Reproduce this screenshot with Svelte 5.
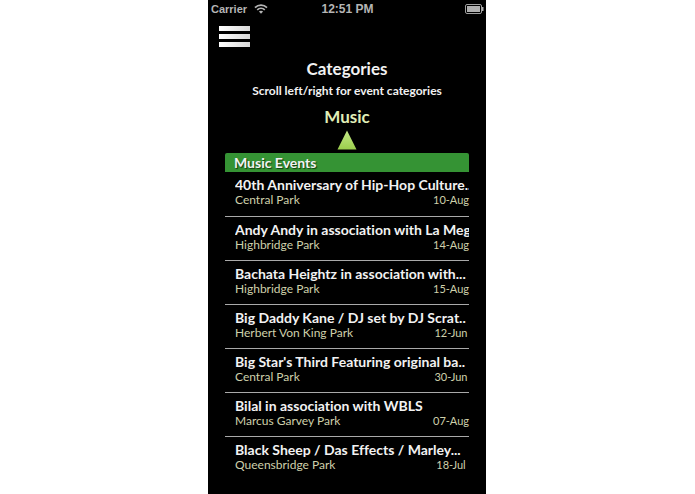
<script lang="ts">
	interface Event {
		name: string
		park: string
		date: string
	}

	const category = 'Music'

	const events: Event[] = [
		{ name: '40th Anniversary of Hip-Hop Culture...', park: 'Central Park', date: '10-Aug' },
		{ name: 'Andy Andy in association with La Mega', park: 'Highbridge Park', date: '14-Aug' },
		{ name: 'Bachata Heightz in association with...', park: 'Highbridge Park', date: '15-Aug' },
		{ name: 'Big Daddy Kane / DJ set by DJ Scrat..', park: 'Herbert Von King Park', date: '12-Jun' },
		{ name: "Big Star's Third Featuring original ba..", park: 'Central Park', date: '30-Jun' },
		{ name: 'Bilal in association with WBLS', park: 'Marcus Garvey Park', date: '07-Aug' },
		{ name: 'Black Sheep / Das Effects / Marley...', park: 'Queensbridge Park', date: '18-Jul' }
	]
</script>

<div class="page">
	<div class="phone">
		<div class="status-bar">
			<div class="carrier">
				<span>Carrier</span>
				<svg class="wifi" viewBox="0 0 14 10" aria-hidden="true">
					<path d="M1 3.6C4.4.4 9.6.4 13 3.6" />
					<path d="M3.2 5.9c2.2-2 5.4-2 7.6 0" />
					<path class="dot" d="M4.9 7.6c1.3-1 2.9-1 4.2 0L7 9.8z" />
				</svg>
			</div>
			<span class="clock">12:51 PM</span>
			<svg class="battery" viewBox="0 0 19 10" aria-hidden="true">
				<rect class="shell" x="0.5" y="0.5" width="16" height="9" rx="1.5" />
				<rect class="charge" x="2" y="2" width="13" height="6" />
				<path class="charge" d="M17 3h1.5v4H17z" />
			</svg>
		</div>

		<button class="menu" aria-label="Menu">
			<span class="bar"></span>
			<span class="bar"></span>
			<span class="bar"></span>
		</button>

		<header>
			<h1>Categories</h1>
			<p class="hint">Scroll left/right for event categories</p>
			<h2>{category}</h2>
			<svg class="pointer" viewBox="0 0 20 20" aria-hidden="true">
				<defs>
					<linearGradient id="pointer-fill" x1="0" y1="0" x2="0" y2="1">
						<stop offset="0" stop-color="#c4e887" />
						<stop offset="1" stop-color="#9bce4c" />
					</linearGradient>
				</defs>
				<path d="M10 0.5L19.5 19.5H0.5z" fill="url(#pointer-fill)" />
			</svg>
		</header>

		<section>
			<h3>{category} Events</h3>
			<ul>
				{#each events as event}
					<li>
						<div class="name">{event.name}</div>
						<div class="details">
							<span>{event.park}</span>
							<span class="date">{event.date}</span>
						</div>
					</li>
				{/each}
			</ul>
		</section>
	</div>
</div>

<style>
	:global(body) {
		margin: 0;
		background: #fff;
	}

	.page {
		display: flex;
		justify-content: center;
		padding-right: 1px;
		font-family: Lato, 'Open Sans', sans-serif;
		font-variant-ligatures: none;
	}

	.phone {
		box-sizing: border-box;
		width: 40vw;
		min-width: 278px;
		min-height: 100vh;
		background: #000;
		color: #f2f2f2;
		overflow: hidden;
	}

	.status-bar {
		display: grid;
		grid-template-columns: 1fr auto 1fr;
		align-items: center;
		height: 18px;
		padding: 0 2px 0 3px;
		font: bold 11px/18px 'Liberation Sans', Arial, sans-serif;
		color: #b5b5b5;
	}

	.carrier {
		display: flex;
		align-items: center;
		gap: 7px;
	}

	.wifi {
		width: 14px;
		height: 10px;
		fill: none;
		stroke: #b5b5b5;
		stroke-width: 1.7;
	}

	.wifi .dot {
		fill: #b5b5b5;
		stroke: none;
	}

	.clock {
		font-size: 12px;
	}

	.battery {
		justify-self: end;
		width: 19px;
		height: 10px;
	}

	.shell {
		fill: none;
		stroke: #a0a0a0;
	}

	.charge {
		fill: #b0b0b0;
	}

	.menu {
		display: flex;
		flex-direction: column;
		gap: 3px;
		width: 31px;
		margin: 8px 0 0 11px;
		padding: 0;
		border: 0;
		background: none;
		cursor: pointer;
	}

	.bar {
		height: 5px;
		background: linear-gradient(to right, #fff, #d8d8d8);
	}

	header {
		display: flex;
		flex-direction: column;
		align-items: center;
		padding-top: 12px;
	}

	h1,
	h2,
	h3,
	p,
	ul {
		margin: 0;
		padding: 0;
	}

	h1 {
		font-size: 17px;
		font-weight: 700;
		line-height: 20px;
	}

	.hint {
		margin-top: 4px;
		font-size: 12px;
		font-weight: 700;
		line-height: 16px;
	}

	h2 {
		margin-top: 8px;
		font-size: 17px;
		font-weight: 700;
		line-height: 20px;
		color: #e0efb8;
	}

	.pointer {
		width: 20px;
		height: 20px;
		margin-top: 3px;
	}

	section {
		margin: 3px 17px 0;
	}

	h3 {
		padding-left: 9px;
		border-radius: 2px 2px 0 0;
		background: #359334;
		font-size: 14px;
		font-weight: 700;
		line-height: 19px;
		text-shadow: 1px 1px 1px #0d3a0d;
	}

	ul {
		list-style: none;
	}

	li {
		box-sizing: border-box;
		height: 44px;
		padding: 5px 0 0 10px;
	}

	li + li {
		border-top: 1px solid #a9a9a9;
	}

	.name {
		overflow: hidden;
		font-size: 14px;
		font-weight: 700;
		line-height: 16px;
		white-space: nowrap;
	}

	.details {
		display: flex;
		justify-content: space-between;
		font-size: 12px;
		line-height: 14px;
		color: #cfd0ab;
	}

	.date {
		width: 36px;
		font-size: 11px;
		text-align: center;
	}
</style>
